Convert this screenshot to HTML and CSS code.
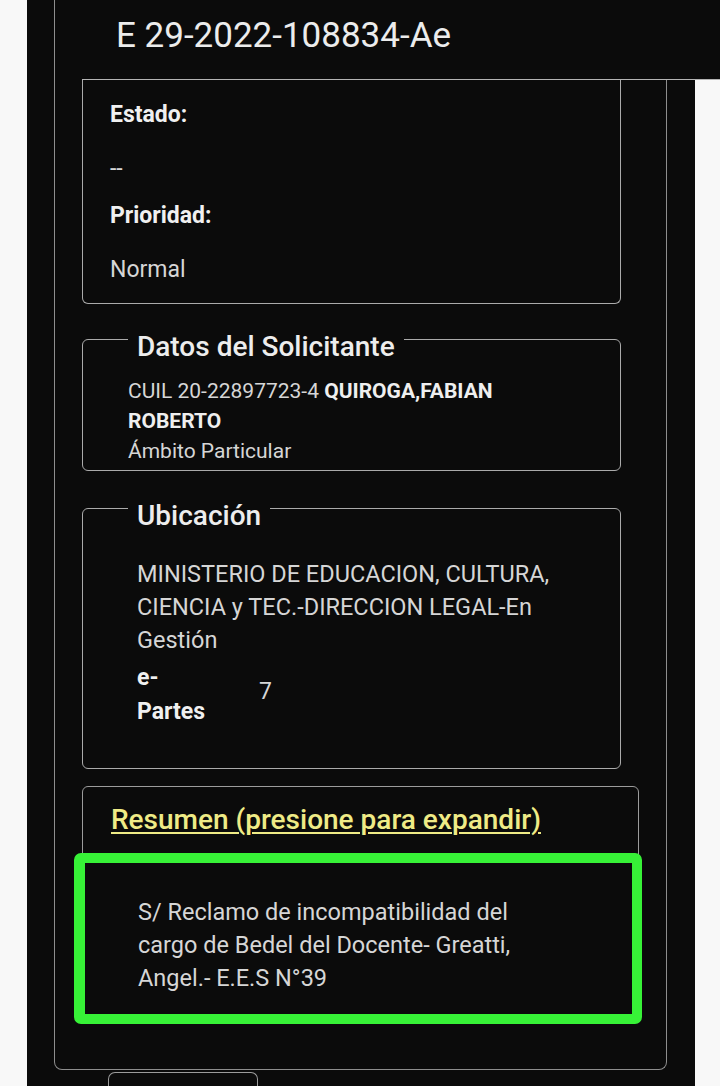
FILE: index.html
```html
<!DOCTYPE html>
<html lang="es">
<head>
<meta charset="utf-8">
<title>E 29-2022-108834-Ae</title>
<link rel="stylesheet" href="styles.css">
</head>
<body>
<div class="panel">
  <div class="outer">
    <section class="card card-top">
      <div class="label">Estado:</div>
      <div class="value">--</div>
      <div class="label">Prioridad:</div>
      <div class="value">Normal</div>
    </section>
    <section class="card fbox solicitante">
      <h2 class="fbox-title">Datos del Solicitante</h2>
      <div class="sol-body"><span>CUIL 20-22897723-4</span> <b>QUIROGA,FABIAN</b><br><b>ROBERTO</b><br><span>Ámbito Particular</span></div>
    </section>
    <section class="card fbox ubicacion">
      <h2 class="fbox-title">Ubicación</h2>
      <p class="ubi-text">MINISTERIO DE EDUCACION, CULTURA, CIENCIA y TEC.-DIRECCION LEGAL-En Gestión</p>
      <div class="ubi-grid">
        <div class="ubi-key">e-Partes</div>
        <div class="ubi-val">7</div>
      </div>
    </section>
    <section class="resumen">
      <div class="resumen-head"><a class="resumen-link" href="#">Resumen (presione para expandir)</a></div>
      <div class="resumen-body">
        <p>S/ Reclamo de incompatibilidad del cargo de Bedel del Docente- Greatti, Angel.- E.E.S N°39</p>
      </div>
    </section>
  </div>
  <div class="tab"></div>
</div>
<header class="topbar">E 29-2022-108834-Ae</header>
</body>
</html>
```

FILE: styles.css
```css
* { box-sizing: border-box; }

html, body {
  margin: 0;
  padding: 0;
}

body {
  background: #f8f8f8;
  font-family: Roboto, "Liberation Sans", Arial, sans-serif;
  color: #d9d9d9;
}

.panel {
  margin-left: 27px;
  width: 668px;
  min-height: 1086px;
  background: #0b0b0b;
  display: flow-root;
}

.outer {
  margin-left: 27px;
  width: 613px;
  border: 1px solid #8e8e8e;
  border-top: none;
  border-radius: 0 0 8px 8px;
  padding: 80px 0 52px;
}

.card {
  margin-left: 27px;
  width: 539px;
  border: 1px solid #ababab;
  border-radius: 6px;
}

.card-top {
  border-top: none;
  border-radius: 0 0 6px 6px;
  padding: 20px 28px 18px 27px;
}

.label {
  font-size: 23px;
  font-weight: 700;
  line-height: 30px;
  color: #f0f0f0;
  margin-bottom: 24px;
}

.value {
  font-size: 23px;
  line-height: 30px;
  color: #d6d6d6;
  margin-bottom: 17px;
}

.value:last-child { margin-bottom: 0; }

.fbox-title {
  display: table;
  margin: -8px 0 1px 0;
  padding: 0 9px;
  background: #0b0b0b;
  font-size: 28px;
  font-weight: 500;
  line-height: 30px;
  color: #ededed;
}

.solicitante {
  margin-top: 35px;
  padding: 0 60px 4px 45px;
}

.sol-body {
  margin-top: 14px;
  font-size: 21px;
  line-height: 30px;
  color: #d6d6d6;
}

.sol-body b {
  font-weight: 700;
  color: #efefef;
}

.ubicacion {
  margin-top: 37px;
  padding: 0 54px 39px 54px;
}

.ubicacion .fbox-title { margin-left: -9px; }

.ubi-text {
  margin: 27px 0 0;
  font-size: 23.5px;
  line-height: 33px;
  color: #d6d6d6;
}

.ubi-grid {
  margin-top: 4px;
  display: grid;
  grid-template-columns: 70px 1fr;
  column-gap: 52px;
  align-items: center;
}

.ubi-key {
  font-size: 23px;
  font-weight: 700;
  line-height: 34px;
  color: #f0f0f0;
}

.ubi-val {
  font-size: 23px;
  line-height: 30px;
  color: #d6d6d6;
  margin-top: -6px;
}

.resumen {
  margin: 17px 0 0 27px;
  width: 557px;
  border: 1px solid #9c9c9c;
  border-radius: 6px;
  padding-top: 17px;
}

.resumen-head {
  padding-left: 28px;
  font-size: 28px;
  line-height: 32px;
}

.resumen-link {
  font-size: 28px;
  font-weight: 500;
  color: #efeb86;
  text-decoration: underline;
  text-decoration-thickness: 2px;
  text-underline-offset: 3px;
}

.resumen-body {
  margin: 17px -4px -8px -9px;
  border: 10px solid #37f237;
  border-left-width: 11px;
  border-radius: 7px;
  background: #0b0b0b;
  padding: 33px 93px 19px 53px;
}

.resumen-body p {
  margin: 0;
  font-size: 23.5px;
  line-height: 33px;
  color: #d6d6d6;
}

.tab {
  margin: 2px 0 0 81px;
  width: 150px;
  height: 40px;
  border: 1px solid #9c9c9c;
  border-bottom: none;
  border-radius: 7px 7px 0 0;
}

.topbar {
  position: fixed;
  top: 0;
  left: 82px;
  right: 0;
  height: 80px;
  padding: 0 0 7px 34px;
  background: #0b0b0b;
  border-bottom: 1px solid #b4b4b4;
  font-size: 35px;
  line-height: 72px;
  color: #ececec;
}
```
